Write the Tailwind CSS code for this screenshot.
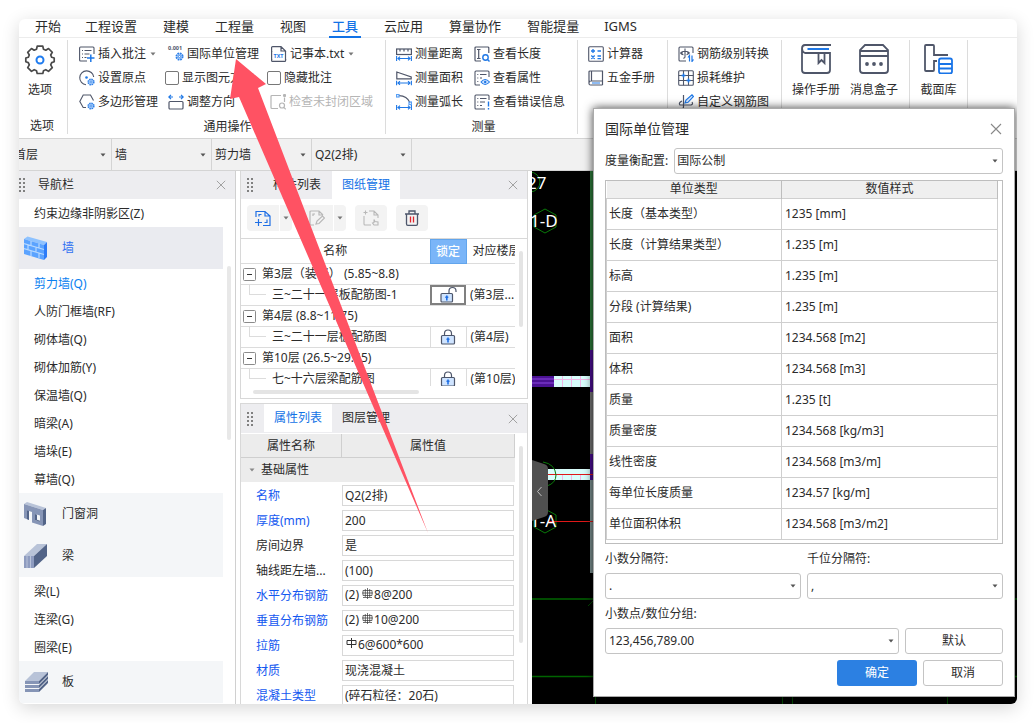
<!DOCTYPE html>
<html lang="zh-CN">
<head>
<meta charset="utf-8">
<meta name="viewport" content="width=device-width, initial-scale=1">
<title>国际单位管理</title>
<script src="https://cdn.jsdelivr.net/npm/@tailwindcss/browser@4"></script>
</head>
<body class="h-screen bg-white p-[19px] font-['Noto_Sans','Noto_Sans_CJK_SC',sans-serif] text-xs text-[#2b2b2b]">

<svg class="hidden" aria-hidden="true">
  <symbol id="close" viewBox="0 0 12 12"><path d="M1 1l10 10M11 1L1 11" fill="none" stroke="currentColor" stroke-width="1.1"/></symbol>
  <symbol id="caret" viewBox="0 0 6 4"><path d="M.5 .5h5L3 3.500z" fill="currentColor"/></symbol>
  <symbol id="grip" viewBox="0 0 6 14"><path d="M0 0h2v2H0zM4 0h2v2H4zM0 4h2v2H0zM4 4h2v2H4zM0 8h2v2H0zM4 8h2v2H4zM0 12h2v2H0zM4 12h2v2H4z" fill="#808080"/></symbol>
  <symbol id="cog" viewBox="0 0 8 8"><circle cx="4" cy="4" r="2.8" fill="#b9d6fb" stroke="#2f80e8" stroke-width="1.6" stroke-dasharray="1.5 .7"/><circle cx="4" cy="4" r="1" fill="#fff" stroke="#2f80e8" stroke-width=".8"/></symbol>
  <symbol id="span" viewBox="0 0 16 5"><path d="M.6 0v5M15.4 0v5M2 2.5h12M4 .7L2 2.5l2 1.8M12 .7l2 1.8-2 1.8" fill="none" stroke="#1f78e6" stroke-width="1.1"/></symbol>
  <symbol id="minus" viewBox="0 0 13 13"><rect x=".5" y=".5" width="12" height="12" rx="1" fill="#fff" stroke="#8b8b8b"/><path d="M4 6.5h5" stroke="#333"/></symbol>
  <symbol id="lock" viewBox="0 0 16 16"><path d="M4.500 7V4.500a3.500 3.500 0 017 0V7" fill="none" stroke="#4d566b" stroke-width="1.200"/><rect x="1.500" y="6.500" width="13" height="8.500" rx="1" fill="#cfe4ff" stroke="#4d566b" stroke-width="1.200"/><path d="M8 8.500v5M6.500 10.300h3" stroke="#1f6fe5" stroke-width="1.600"/></symbol>
  <symbol id="rebar3" viewBox="0 0 11 11"><path d="M1 2.500h9v5H1zM5.500 0v11M3.300 1v8M7.700 1v8M1 9.500h9M0 5h11" fill="none" stroke="#333" stroke-width=".7"/></symbol>
  <symbol id="rebar1" viewBox="0 0 11 11"><path d="M1 2.500h9v4H1zM5.500 0v10" fill="none" stroke="#333"/></symbol>
</svg>

<main class="relative flex h-full flex-col overflow-hidden rounded-md bg-white shadow-[0_4px_18px_rgba(0,0,0,0.16)]">

  <nav class="flex h-[19px] shrink-0 border-b border-[#ececec] pl-[3px] text-[13px] leading-[14px]">
    <a href="#" class="pr-[11px] pl-[13px]">开始</a>
    <a href="#" class="px-[13px]">工程设置</a>
    <a href="#" class="px-[13px]">建模</a>
    <a href="#" class="px-[13px]">工程量</a>
    <a href="#" class="px-[13px]">视图</a>
    <a href="#" class="mx-[10px] h-[19px] border-b-2 border-[#1272e6] px-[3px] font-medium text-[#1272e6]">工具</a>
    <a href="#" class="px-[13px]">云应用</a>
    <a href="#" class="px-[13px]">算量协作</a>
    <a href="#" class="px-[13px]">智能提量</a>
    <a href="#" class="px-3">IGMS</a>
  </nav>

  <section class="flex h-[101px] shrink-0 border-b border-[#d4d4d4] pt-1 text-xs leading-4" aria-label="工具">
    <div class="flex w-12 shrink-0 flex-col items-center">
      <button class="flex h-[72px] shrink-0 flex-col items-center gap-1.5 pt-0.5 pr-1.5">
        <svg class="size-8" viewBox="0 1 32 32" fill="none" stroke="#4a4a4a" stroke-width="1.700"><path d="M13.200 3.200h5.600l.7 3 2.300 1 2.700-1.700 3.800 3.800-1.600 2.700 1 2.300 2.500.7v3.800l-2.500.8-1 2.300 1.600 2.700-3.800 3.800-2.700-1.700-2.300 1-.7 2.800h-5.600l-.7-2.800-2.300-1-2.700 1.700-3.800-3.800 1.600-2.700-1-2.300-2.500-.8V15l2.500-.7 1-2.300-1.600-2.700 3.800-3.800 2.700 1.700 2.300-1z" stroke-linejoin="round"/><circle cx="16" cy="17" r="3.500" stroke="#1f7cf0" stroke-width="2"/></svg>
        选项
      </button>
      <span class="pr-0.5 leading-6">选项</span>
    </div>
    <div class="h-[94px] w-px shrink-0 -translate-y-0.5 bg-[#dcdcdc]"></div>

    <div class="w-[317px] shrink-0">
      <div class="grid grid-cols-[86px_102px_auto] grid-rows-[24px_24px_24px] items-center pl-[11px] whitespace-nowrap">
        <button class="flex items-center gap-[3px]">
          <svg class="size-4 shrink-0" viewBox="0 0 16 16" fill="none" stroke="#4f5669" stroke-width="1.100"><path d="M15 8V2q0-1-1-1H1.500Q.6 1 .6 2v12q0 1 1 1H8M5.500 4.500h7M5.500 8h5M5.500 11.500h2"/><path d="M3 4.500h1M3 8h1M3 11.500h1"/><path d="M8 12h7.500M11.800 8.500v7.500" stroke="#1f78e6" stroke-width="1.500"/></svg>
          插入批注<svg class="ml-px h-1 w-1.5 text-[#777]"><use href="#caret"/></svg>
        </button>
        <button class="flex items-center gap-[3px] pl-[3px]">
          <svg class="size-4 shrink-0 overflow-visible" viewBox="0 0 16 16"><text x="0" y="4" font-size="5.500" font-weight="700" fill="#4f5669">0.001</text><use href="#cog" x="7" y="6" width="9" height="9"/></svg>
          国际单位管理
        </button>
        <button class="flex items-center gap-[3px] pl-1">
          <svg class="size-4 shrink-0 overflow-visible" viewBox="0 0 16 16" fill="none" stroke="#4f5669" stroke-width="1.200"><path d="M.6 6V1.500q0-.9 1-.9H10l4.500 4.500V6M10 .6V5h4.500M.6 13v1.500q0 .9 1 .9h12q1 0 1-.9V13"/><path d="M.6 5v9M14.500 5v9"/><text x="2.500" y="12" font-size="5.500" font-weight="700" fill="#1f78e6" stroke="none">TXT</text></svg>
          记事本.txt<svg class="ml-px h-1 w-1.5 text-[#777]"><use href="#caret"/></svg>
        </button>

        <button class="flex items-center gap-[3px]">
          <svg class="size-4 shrink-0" viewBox="0 0 16 16" fill="none" stroke="#4f5669" stroke-width="1.100"><path d="M14.700 7A7 7 0 107 14.800"/><circle cx="7.500" cy="7.500" r="1.300" fill="#1f78e6" stroke="none"/><use href="#cog" x="8" y="8" width="8" height="8" stroke="none"/></svg>
          设置原点
        </button>
        <label class="flex items-center gap-[3px]"><input type="checkbox" class="size-3.5 appearance-none rounded-[2px] border border-[#777] bg-white">显示图元方向</label>
        <label class="flex items-center gap-[3px]"><input type="checkbox" class="size-3.5 appearance-none rounded-[2px] border border-[#777] bg-white">隐藏批注</label>

        <button class="flex items-center gap-[3px]">
          <svg class="size-4 shrink-0" viewBox="0 0 16 16" fill="none" stroke="#4f5669" stroke-width="1.100"><path d="M14.500 6.500L11.500 1H4.200L.8 7.500l3.400 6H7"/><use href="#cog" x="8" y="8" width="8" height="8" stroke="none"/></svg>
          多边形管理
        </button>
        <button class="flex items-center gap-[3px] pl-[3px]">
          <svg class="size-4 shrink-0" viewBox="0 0 16 16" fill="none" stroke="#4f5669" stroke-width="1.200"><rect x="1" y="7.500" width="14" height="7.500" rx="1"/><path d="M5 3H1M3 .8L.8 3 3 5.200M11 3h4M13 .8L15.200 3 13 5.200" stroke="#1f78e6"/></svg>
          调整方向
        </button>
        <button class="flex items-center gap-[3px] pl-[3px] text-[#b5b5b5]" disabled>
          <svg class="size-4 shrink-0" viewBox="0 0 16 16" fill="none" stroke="#b5b5b5" stroke-width="1.200"><path d="M11 1.500H2q-1 0-1 1v11q0 1 1 1h6M14.500 3.500V8"/><circle cx="14.500" cy="1.500" r="1" fill="#b5b5b5"/><circle cx="12" cy="11.500" r="2.500"/><path d="M13.800 13.300l2 2"/></svg>
          检查未封闭区域
        </button>
      </div>
      <div class="pl-0.5 text-center leading-[26px]">通用操作</div>
    </div>
    <div class="h-[94px] w-px shrink-0 -translate-y-0.5 bg-[#dcdcdc]"></div>

    <div class="w-[191px] shrink-0">
      <div class="grid grid-cols-[78px_auto] grid-rows-[24px_24px_24px] items-center pl-2.5 whitespace-nowrap">
        <button class="flex items-center gap-[3px]">
          <svg class="size-4 shrink-0" viewBox="0 0 16 16" fill="none" stroke="#4f5669" stroke-width="1.200"><rect x=".6" y="3" width="14.800" height="5.500"/><path d="M4 3v2.500M8 3v2.500M12 3v2.500"/><use href="#span" y="10" width="16" height="5"/></svg>
          测量距离
        </button>
        <button class="flex items-center gap-[3px]">
          <svg class="size-4 shrink-0" viewBox="0 0 16 16" fill="none" stroke="#4f5669" stroke-width="1.200"><path d="M14.800 7V2q0-1-1-1H2Q1 1 1 2v12q0 1 1 1h5M3 3.500h3.500M3 12.500h3.500M4.700 3.500v9"/><circle cx="11.500" cy="11.500" r="2.700" stroke="#1f78e6" stroke-width="1.400"/><path d="M13.500 13.500l2 2" stroke="#1f78e6" stroke-width="1.400"/></svg>
          查看长度
        </button>
        <button class="flex items-center gap-[3px]">
          <svg class="size-4 shrink-0" viewBox="0 0 16 16" fill="none" stroke="#4f5669" stroke-width="1.200"><path d="M.8 2v6.800h14.400V7z"/><use href="#span" y="10.500" width="16" height="5"/></svg>
          测量面积
        </button>
        <button class="flex items-center gap-[3px]">
          <svg class="size-4 shrink-0" viewBox="0 0 16 16" fill="none" stroke="#4f5669" stroke-width="1.100"><path d="M15 7V2q0-1-1-1H2Q1 1 1 2v12q0 1 1 1h4M6 4.500h6.500M6 8h2M3.300 4.500h1M3.300 8h1M3.300 11.500h1"/><path d="M7 12q4-5 8.500 0-4.500 5-8.500 0z" stroke="#1f78e6" fill="#cfe3ff"/><circle cx="11.200" cy="12" r="1.200" fill="#1f78e6" stroke="none"/></svg>
          查看属性
        </button>
        <button class="flex items-center gap-[3px]">
          <svg class="size-4 shrink-0" viewBox="0 0 16 16" fill="none" stroke="#4f5669" stroke-width="1.200"><path d="M3 1.700q8 .3 11 7"/><rect x=".5" y=".5" width="2.500" height="2.500" stroke="#59a0f5"/><rect x="13" y="8" width="2.500" height="2.500" stroke="#59a0f5"/><use href="#span" y="11" width="16" height="5"/></svg>
          测量弧长
        </button>
        <button class="flex items-center gap-[3px]">
          <svg class="size-4 shrink-0" viewBox="0 0 16 16" fill="none" stroke="#4f5669" stroke-width="1.100"><path d="M15 6V2q0-1-1-1H2Q1 1 1 2v12q0 1 1 1h9M6 4.500h6.500M6 8h5M6 11.500h2M3.300 4.500h1M3.300 8h1M3.300 11.500h1"/><path d="M14.500 7.500v5M14.500 14v1.500" stroke="#1f78e6" stroke-width="1.400"/></svg>
          查看错误信息
        </button>
      </div>
      <div class="pl-1 text-center leading-[26px]">测量</div>
    </div>
    <div class="h-[94px] w-px shrink-0 -translate-y-0.5 bg-[#dcdcdc]"></div>

    <div class="grid w-[89px] shrink-0 grid-rows-[24px_24px] content-start items-center pl-2.5 whitespace-nowrap">
      <button class="flex items-center gap-[3px]">
        <svg class="size-4 shrink-0" viewBox="0 0 16 16" fill="none" stroke="#1f78e6" stroke-width="1.300"><rect x=".7" y=".7" width="14.600" height="14.600" rx="1" stroke="#4f5669" stroke-width="1.100"/><path d="M3 5h4M5 3v4M9.500 5H13M3.300 9.500l3.400 3.400M6.700 9.500l-3.400 3.400M9.500 10H13M9.500 12.700H13"/></svg>
        计算器
      </button>
      <button class="flex items-center gap-[3px]">
        <svg class="size-4 shrink-0" viewBox="0 0 16 16" fill="none" stroke="#4f5669" stroke-width="1.200"><path d="M14.500 15H2.500Q1 15 1 13.500V2q0-1 1-1h12.500v10H3q-2 0-2 2M3.500 1v10M14.500 11v4"/><path d="M4 13h8" stroke="#1f78e6"/></svg>
        五金手册
      </button>
    </div>
    <div class="h-[94px] w-px shrink-0 -translate-y-0.5 bg-[#dcdcdc]"></div>

    <div class="grid w-[113px] shrink-0 grid-rows-[24px_24px_24px] content-start items-center pl-2.5 whitespace-nowrap">
      <button class="flex items-center gap-[3px]">
        <svg class="size-4 shrink-0" viewBox="0 0 16 16" fill="none" stroke="#4f5669" stroke-width="1.100"><path d="M15 7V2q0-1-1-1H2Q1 1 1 2v12q0 1 1 1h6"/><path d="M5.500 8.800Q3 8.500 3 7t4-1.800q4 .3 4 1.800-.2 1.200-2.500 1.700M2 7h3M9 7h3M7 2.500V11q0 1-1.800 1.200"/><path d="M11.500 15.500V9.500l-1.500 2M14 9.500v6l1.500-2" stroke="#1f78e6" stroke-width="1.200"/></svg>
        钢筋级别转换
      </button>
      <button class="flex items-center gap-[3px]">
        <svg class="size-4 shrink-0" viewBox="0 0 16 16" fill="none" stroke="#4f5669" stroke-width="1.100"><rect x=".7" y=".7" width="14.600" height="14.600" rx="1"/><path d="M.7 5.500h14.600M.7 10.500h14.600M5.500.7v14.600M10.500.7v14.600"/><path d="M5.500 3.500v4M3.500 5.500h4M10.500 8.500v4M8.500 10.500h4" stroke="#1f78e6" stroke-width="1.400"/></svg>
        损耗维护
      </button>
      <button class="flex items-center gap-[3px]">
        <svg class="size-4 shrink-0" viewBox="0 0 16 16" fill="none" stroke="#4f5669" stroke-width="1.200"><path d="M5.500 1v12q0 2-2 2M4 7Q0 9 2 11h11q2.500-1 1-3"/><path d="M7 9l1-3L14 .8 15.500 2.500 10 8.300z" stroke="#1f78e6" fill="#d9e9ff"/></svg>
        自定义钢筋图
      </button>
    </div>
    <div class="h-[94px] w-px shrink-0 -translate-y-0.5 bg-[#dcdcdc]"></div>

    <div class="flex w-[127px] shrink-0 items-start gap-2.5 pl-2.5 whitespace-nowrap">
      <button class="flex flex-col items-center gap-2 pt-0.5">
        <svg class="size-[30px]" viewBox="0 0 30 30" fill="none" stroke="#4f5669" stroke-width="1.800"><path d="M30 1H4Q1 1 1 4.500T4 9h25v17q0 3-3 3H4q-3 0-3-3V4.500M17.500 9v10l3-3 3 3V9"/><path d="M6.500 5H28" stroke="#1f78e6"/></svg>
        操作手册
      </button>
      <button class="flex flex-col items-center gap-2 pt-0.5">
        <svg class="size-[30px]" viewBox="0 0 30 30" fill="none" stroke="#4f5669" stroke-width="1.800"><path d="M1 12h28v14q0 3-3 3H4q-3 0-3-3zV6l5-5h18l5 5v6M1 7h28"/><g fill="#4f5669" stroke="none"><circle cx="8" cy="20" r="1.900"/><circle cx="15" cy="20" r="1.900"/><circle cx="22" cy="20" r="1.900"/></g></svg>
        消息盒子
      </button>
    </div>
    <div class="h-[94px] w-px shrink-0 -translate-y-0.5 bg-[#dcdcdc]"></div>
    <div class="flex w-[57px] shrink-0 items-start justify-center whitespace-nowrap">
      <button class="flex flex-col items-center gap-2 pt-0.5">
        <svg class="size-[30px]" viewBox="0 0 30 30" fill="none" stroke="#4f5669" stroke-width="1.800"><path d="M25 11H11V2q0-1-1-1H3Q2 1 2 2v24q0 1 1 1h7q1 0 1-1v-9h3"/><path d="M16 16.500q0-2 2-2h9q2 0 2 2v11q0 2-2 2h-9q-2 0-2-2zM16 20h13M16 24.500h13" stroke="#1874e8"/></svg>
        截面库
      </button>
    </div>
    <div class="h-[94px] w-px shrink-0 -translate-y-0.5 bg-[#dcdcdc]"></div>
  </section>

  <section class="flex h-8 shrink-0 overflow-hidden border-b border-[#d4d4d4] bg-[#f1f1f1]" aria-label="构件选择">
    <div class="relative -ml-2 w-[101px] border-r border-[#d4d4d4]"><select aria-label="楼层" class="h-full w-full appearance-none bg-transparent px-[3px]"><option>首层</option></select><svg class="pointer-events-none absolute top-3.5 right-[5px] h-1 w-1.5 text-[#555]"><use href="#caret"/></svg></div>
    <div class="relative w-[100px] border-r border-[#d4d4d4]"><select aria-label="构件大类" class="h-full w-full appearance-none bg-transparent px-[3px]"><option>墙</option></select><svg class="pointer-events-none absolute top-3.5 right-[5px] h-1 w-1.5 text-[#555]"><use href="#caret"/></svg></div>
    <div class="relative w-[100px] border-r border-[#d4d4d4]"><select aria-label="构件类型" class="h-full w-full appearance-none bg-transparent px-[3px]"><option>剪力墙</option></select><svg class="pointer-events-none absolute top-3.5 right-[5px] h-1 w-1.5 text-[#555]"><use href="#caret"/></svg></div>
    <div class="relative w-[100px] border-r border-[#d4d4d4]"><select aria-label="构件名称" class="h-full w-full appearance-none bg-transparent px-[3px]"><option>Q2(2排)</option></select><svg class="pointer-events-none absolute top-3.5 right-[5px] h-1 w-1.5 text-[#555]"><use href="#caret"/></svg></div>
  </section>

  <div class="flex min-h-0 flex-1">

    <aside class="flex w-[217px] shrink-0 flex-col border-r border-[#d0d0d0]">
      <header class="flex h-7 shrink-0 items-center bg-[#ededf0] pr-[9px]">
        <svg class="h-3.5 w-1.5"><use href="#grip"/></svg>
        <h2 class="ml-[13px] flex-1">导航栏</h2>
        <button aria-label="关闭导航栏" class="text-[#999]"><svg class="size-2.5"><use href="#close"/></svg></button>
      </header>
      <div class="flex min-h-0 flex-1 gap-1 overflow-hidden">
        <ul class="w-[204px] leading-7">
          <li><a href="#" class="block h-7 pl-[15px] leading-[30px]">约束边缘非阴影区(Z)</a></li>
          <li><button class="flex h-[42px] w-full items-center gap-3.5 bg-[#eaebf0] pl-[5px] text-[#2e6ff2]">
            <svg class="size-6" viewBox="0 0 24 24"><path d="M0 3l3.500-2.500L23 6l-3 3z" fill="#8ec2ff"/><path d="M0 3l20 6v15L0 18z" fill="#5ba3ff"/><path d="M20 9l3-3v15l-3 3z" fill="#2c7bf7"/><path d="M0 7.500l20 6M0 12.500l20 6M7 5v4.500M15 7.500V12M4 9v4.500M12 11.500v4.500M7 15v5M15 17v5" stroke="#b6d8ff" stroke-width="1.200"/></svg>墙</button></li>
          <li><a href="#" class="block h-7 pl-[15px] leading-[30px] text-[#0a80f0]">剪力墙(Q)</a></li>
          <li><a href="#" class="block h-7 pl-[15px] leading-[30px]">人防门框墙(RF)</a></li>
          <li><a href="#" class="block h-7 pl-[15px] leading-[30px]">砌体墙(Q)</a></li>
          <li><a href="#" class="block h-7 pl-[15px] leading-[30px]">砌体加筋(Y)</a></li>
          <li><a href="#" class="block h-7 pl-[15px] leading-[30px]">保温墙(Q)</a></li>
          <li><a href="#" class="block h-7 pl-[15px] leading-[30px]">暗梁(A)</a></li>
          <li><a href="#" class="block h-7 pl-[15px] leading-[30px]">墙垛(E)</a></li>
          <li><a href="#" class="block h-7 pl-[15px] leading-[30px]">幕墙(Q)</a></li>
          <li><button class="flex h-[42px] w-full items-center gap-3.5 bg-[#f4f6f8] pl-[5px]">
            <svg class="size-6" viewBox="0 0 24 24"><path d="M0 2l3-2 19 6-3 2z" fill="#b8c3d8"/><path d="M0 2l19 6v16L8 20.500V10L5 9v9l-5-2zM11 12v6l5 1.500v-6z" fill="#8695b6" fill-rule="evenodd"/><path d="M19 8l3-2v16l-3 2zM3 8.500L5 9v9l-2-1zM11 12l2 .7v5l3 1v1L11 18z" fill="#526488"/></svg>门窗洞</button></li>
          <li><button class="flex h-[42px] w-full items-center gap-3.5 bg-[#f4f6f8] pl-[5px]">
            <svg class="size-6" viewBox="0 0 24 24"><path d="M0 12L13 0h10L10 12z" fill="#b8c3d8"/><path d="M0 12h10v12H0z" fill="#8e9cc0"/><path d="M10 12L23 0v12L10 24z" fill="#526488"/><path d="M3 12v12M6.500 12v12" stroke="#b9c3da"/></svg>梁</button></li>
          <li><a href="#" class="block h-7 pl-[15px] leading-[30px]">梁(L)</a></li>
          <li><a href="#" class="block h-7 pl-[15px] leading-[30px]">连梁(G)</a></li>
          <li><a href="#" class="block h-7 pl-[15px] leading-[30px]">圈梁(E)</a></li>
          <li><button class="flex h-[42px] w-full items-center gap-3.5 bg-[#f4f6f8] pl-[5px]">
            <svg class="size-6" viewBox="0 0 24 24"><path d="M1 11L10 2h14l-9 9z" fill="#b8c3d8"/><path d="M1 11h14v3H1zM1 15h14v3H1zM1 19h14v3H1z" fill="#8695b6"/><path d="M15 11l9-9v3l-9 9zM15 15l9-9v3l-9 9zM15 19l9-9v3l-9 9z" fill="#526488"/></svg>板</button></li>
        </ul>
        <div class="mt-[67px] h-[174px] w-1 rounded-full bg-[#e8e8e8]"></div>
      </div>
    </aside>

    <div class="flex w-[296px] shrink-0 flex-col gap-1 px-1">
      <section class="flex h-[228px] shrink-0 flex-col border border-t-0 border-[#d8d8d8]">
        <header class="flex h-7 shrink-0 items-center bg-[#ededf0] pr-[9px] pl-1.5">
          <svg class="mr-[18px] h-3.5 w-1.5"><use href="#grip"/></svg>
          <div class="flex flex-1 self-stretch" role="tablist">
            <button role="tab" class="w-[61px] pr-2.5 pl-0.5 text-left whitespace-nowrap">构件列表</button>
            <button role="tab" aria-selected="true" class="w-[68px] bg-white text-[#1272e6]">图纸管理</button>
          </div>
          <button aria-label="关闭图纸管理" class="text-[#999]"><svg class="size-2.5"><use href="#close"/></svg></button>
        </header>
        <div class="flex h-10 shrink-0 items-center gap-[9px] border-b border-[#d8d8d8] pb-px pl-1.5">
          <div class="flex gap-px">
            <button aria-label="添加图纸" class="grid h-[26px] w-8 place-items-center rounded-l-sm bg-[#f3f3f3]"><svg class="size-4" viewBox="0 0 16 16" fill="none" stroke="#1f6fe5" stroke-width="1.200"><path d="M1 7V1.500h9l5 4.500v9.500H8M10 1.500V6h5M4 6.500V4.500h2.500M12 9.500v3H9.500M0 12.500h7M3.500 9v7"/></svg></button>
            <button aria-label="添加图纸选项" class="grid h-[26px] w-3 place-items-center rounded-r-sm bg-[#f3f3f3] text-[#777]"><svg class="h-1 w-1.5"><use href="#caret"/></svg></button>
          </div>
          <div class="flex gap-px">
            <button aria-label="分割图纸" class="grid h-[26px] w-8 place-items-center rounded-l-sm bg-[#f3f3f3]"><svg class="size-4" viewBox="0 0 16 16" fill="none" stroke="#b8b8b8" stroke-width="1.200"><path d="M5 15H2q-1 0-1-1V2q0-1 1-1h8l4 4M10 1v4h4M4 6V4h2M7 14l1-3 5.500-5L15.500 8 10 13.500z"/></svg></button>
            <button aria-label="分割图纸选项" class="grid h-[26px] w-3 place-items-center rounded-r-sm bg-[#f3f3f3] text-[#777]"><svg class="h-1 w-1.5"><use href="#caret"/></svg></button>
          </div>
          <button aria-label="定位图纸" class="grid h-[26px] w-8 place-items-center rounded-sm bg-[#f3f3f3]"><svg class="size-4" viewBox="0 0 16 16" fill="none" stroke="#b8b8b8" stroke-width="1.100"><path d="M6 1h5l4 4v3M11 1v4h4M1 6v8q0 1 1 1h6M.5 2.500h4M2.500.5v4M11 15l-1.500-2 1.500-.5V9.500l1 2 3 .5v3z"/></svg></button>
          <button aria-label="删除图纸" class="grid h-[26px] w-8 place-items-center rounded-sm bg-[#f3f3f3]"><svg class="size-4" viewBox="0 0 16 16" fill="none" stroke="#4d566b" stroke-width="1.300"><path d="M1 4h14M5 4V1h6v3M2.500 4v10q0 1.300 1.300 1.300h8.400q1.300 0 1.300-1.300V4"/><path d="M6.500 6.500v6M9.500 6.500v6" stroke="#e0262d"/></svg></button>
        </div>
        <div class="flex gap-1">
          <div class="h-[147px] w-[274px] overflow-hidden">
            <table class="w-[300px] table-fixed border-collapse leading-5 whitespace-nowrap">
              <colgroup><col class="w-[189px]"><col class="w-9"><col></colgroup>
              <thead><tr class="h-6 border-b border-[#dcdcdc]"><th class="font-normal">名称</th><th class="border border-[#62a5ec] bg-[#7ab5f8] font-medium text-white">锁定</th><th class="pl-1.5 text-left font-normal">对应楼层</th></tr></thead>
              <tbody>
                <tr class="h-[21px] border-b border-[#dcdcdc]"><td colspan="3"><div class="flex h-5 items-center gap-1.5 pl-0.5"><button aria-label="收起第3层" class="h-[13px]"><svg class="size-[13px]"><use href="#minus"/></svg></button>第3层（装修） (5.85~8.8)</div></td></tr>
                <tr class="h-[21px] border-b border-[#dcdcdc]"><td class="pl-2"><div class="flex h-5 gap-1.5"><i class="h-2.5 w-[17px] border-b border-l border-[#dcdcdc]"></i>三~二十一层板配筋图-1</div></td><td class="inset-ring-2 inset-ring-[#808080]"><svg class="mx-auto size-4 overflow-visible" viewBox="0 0 16 16"><path d="M9 7V4a3.500 3.500 0 017 0v1" fill="none" stroke="#4d566b" stroke-width="1.200"/><rect x="1" y="6.500" width="11.500" height="8.500" rx="1" fill="#cfe4ff" stroke="#4d566b" stroke-width="1.200"/><path d="M6.800 8.500v5M5.300 10.300h3" stroke="#1f6fe5" stroke-width="1.600"/></svg></td><td class="pl-1">(第3层...</td></tr>
                <tr class="h-[21px] border-b border-[#dcdcdc]"><td colspan="3"><div class="flex h-5 items-center gap-1.5 pl-0.5"><button aria-label="收起第4层" class="h-[13px]"><svg class="size-[13px]"><use href="#minus"/></svg></button>第4层 (8.8~11.75)</div></td></tr>
                <tr class="h-[21px] border-b border-[#dcdcdc]"><td class="pl-2"><div class="flex h-5 gap-1.5"><i class="h-2.5 w-[17px] border-b border-l border-[#dcdcdc]"></i>三~二十一层板配筋图</div></td><td class="border-x border-[#dcdcdc]"><svg class="mx-auto size-4"><use href="#lock"/></svg></td><td class="pl-1">(第4层)</td></tr>
                <tr class="h-[21px] border-b border-[#dcdcdc]"><td colspan="3"><div class="flex h-5 items-center gap-1.5 pl-0.5"><button aria-label="收起第10层" class="h-[13px]"><svg class="size-[13px]"><use href="#minus"/></svg></button>第10层 (26.5~29.45)</div></td></tr>
                <tr class="h-[21px]"><td class="pl-2"><div class="flex h-5 gap-1.5"><i class="h-2.5 w-[17px] border-b border-l border-[#dcdcdc]"></i>七~十六层梁配筋图</div></td><td class="border-x border-[#dcdcdc]"><svg class="mx-auto size-4"><use href="#lock"/></svg></td><td class="pl-1">(第10层)</td></tr>
              </tbody>
            </table>
          </div>
          <div class="mt-3 h-[76px] w-1 rounded-full bg-[#e4e4e4]"></div>
        </div>
        <div class="mt-1 ml-3 h-1 w-[166px] rounded-full bg-[#e4e4e4]"></div>
      </section>

      <section class="flex min-h-0 flex-1 flex-col overflow-hidden border border-b-0 border-[#d8d8d8]">
        <header class="flex h-[29px] shrink-0 items-center bg-[#ededf0] pr-[9px] pl-1.5">
          <svg class="mr-[11px] h-3.5 w-1.5"><use href="#grip"/></svg>
          <div class="flex flex-1 self-stretch pb-px" role="tablist">
            <button role="tab" aria-selected="true" class="w-[68px] bg-white text-[#1272e6]">属性列表</button>
            <button role="tab" class="w-[68px]">图层管理</button>
          </div>
          <button aria-label="关闭属性列表" class="text-[#999]"><svg class="size-2.5"><use href="#close"/></svg></button>
        </header>
        <div class="flex min-h-0 flex-1 gap-1 pt-px">
          <div class="w-[274px]">
            <div class="grid h-6 grid-cols-[101px_auto] border-r border-b border-[#cfcfcf] bg-[#ececec] text-center leading-6"><span class="border-r border-[#cfcfcf]">属性名称</span><span>属性值</span></div>
            <button class="flex h-6 w-full items-center gap-1.5 bg-[#ececec] pl-2"><svg class="h-1 w-1.5 text-[#888]"><use href="#caret"/></svg>基础属性</button>
            <div class="grid grid-cols-[86px_172px] auto-rows-[21px] gap-y-1 pt-[3px] pl-[15px] leading-[21px] whitespace-nowrap">
              <label for="p1" class="text-[#1458f0]">名称</label><input id="p1" value="Q2(2排)" class="border border-[#d8d8d8] px-0.5">
              <label for="p2" class="text-[#1458f0]">厚度(mm)</label><input id="p2" value="200" class="border border-[#d8d8d8] px-0.5">
              <label for="p3">房间边界</label><input id="p3" value="是" class="border border-[#d8d8d8] px-0.5">
              <label for="p4">轴线距左墙...</label><input id="p4" value="(100)" class="border border-[#d8d8d8] px-0.5">
              <span id="l5" class="text-[#1458f0]">水平分布钢筋</span><div role="textbox" contenteditable="true" aria-labelledby="l5" class="flex border border-[#d8d8d8] px-0.5 leading-[18px]">(2)<svg class="mt-0.5 mr-px ml-[3px] size-[11px]"><use href="#rebar3"/></svg>8@200</div>
              <span id="l6" class="text-[#1458f0]">垂直分布钢筋</span><div role="textbox" contenteditable="true" aria-labelledby="l6" class="flex border border-[#d8d8d8] px-0.5 leading-[18px]">(2)<svg class="mt-0.5 mr-px ml-[3px] size-[11px]"><use href="#rebar3"/></svg>10@200</div>
              <span id="l7" class="text-[#1458f0]">拉筋</span><div role="textbox" contenteditable="true" aria-labelledby="l7" class="flex border border-[#d8d8d8] px-0.5 leading-[18px]"><svg class="mx-px mt-0.5 size-[11px]"><use href="#rebar1"/></svg>6@600*600</div>
              <label for="p8" class="text-[#1458f0]">材质</label><input id="p8" value="现浇混凝土" class="border border-[#d8d8d8] px-0.5">
              <label for="p9" class="text-[#1458f0]">混凝土类型</label><input id="p9" value="(碎石粒径：20石)" class="border border-[#d8d8d8] px-0.5">
            </div>
          </div>
          <div class="mt-3 h-[197px] w-1 rounded-full bg-[#e4e4e4]"></div>
        </div>
      </section>
    </div>

    <div class="min-w-0 flex-1 bg-black">
      <svg class="h-full w-full" role="img" aria-label="绘图区">
        <g transform="translate(-532 -171)">
          <g fill="none" stroke="#0a7a0a">
            <circle cx="530" cy="182" r="10"/><path d="M545 209l11 6v12l-11 6-11-6v-12zM545 509l11 6v12l-11 6-11-6v-12z"/>
            <path d="M532 599h485M532 676.500h485" stroke="#006400" stroke-width="1.500"/><path d="M588 606l6-6M595.500 690v14M782.500 690v14M792.500 690v14M947.500 690v14" stroke="#004a00"/>
          </g>
          <path d="M590 171h3v179h-3z" fill="#2f7d3c"/><path d="M590 350h3v42h-3zM590 454h3v26h-3z" fill="#4d0f96"/><path d="M590 392h3v62h-3z" fill="#777"/><path d="M590 480h3v93h-3z" fill="#7f9494"/>
          <path d="M532 376h22v11h-22z" fill="#4b1293"/><path d="M532 379h22M532 383h22" stroke="#8c46e0"/>
          <path d="M554 376h36v11h-36zM548 469h42v11h-42z" fill="#d8fdfb"/><path d="M554 379.500h36M562.500 376v11M571.500 376v11M580.500 376v11M562.500 475v5M571.500 475v5M580.500 475v5" stroke="#f0b6e6"/>
          <path d="M548 474.500h45M548 521.500h45" stroke="#e01818"/>
          <path d="M543 462q12 2 13 13 0 8-9 11" fill="none" stroke="#0a7a0a"/>
          <g fill="#fff" font-size="17"><text x="527" y="189">27</text><text x="530" y="227">1-D</text><text x="530" y="527">1-A</text></g>
          <path d="M532 460l12 4q4 1 4 5v43q0 4-4 5l-12 4z" fill="#505050"/><path d="M541.500 487l-4 4.500 4 4.500" fill="none" stroke="#c0c0c0"/>
        </g>
      </svg>
    </div>
  </div>

  <svg class="pointer-events-none absolute top-10 left-[211px] h-[474px] w-[198px]" viewBox="230 59 198 474" aria-hidden="true"><path d="M236 59l30 25-8 4 170 445L239 97l-9 2z" fill="#ff5263"/></svg>

  <section role="dialog" aria-labelledby="dlg" class="absolute top-[89px] right-0.5 w-[422px] border border-[#aaa] bg-white px-[11px] pb-2.5 shadow-[0_0_9px_rgba(0,0,0,0.75)]">
    <header class="flex h-[39px] items-center justify-between pr-px">
      <h2 id="dlg" class="text-sm">国际单位管理</h2>
      <button aria-label="关闭" class="text-[#888]"><svg class="size-3"><use href="#close"/></svg></button>
    </header>
    <div class="flex items-center gap-1.5 whitespace-nowrap">
      <label for="cfg">度量衡配置:</label>
      <div class="relative flex-1"><select id="cfg" class="h-[26px] w-full appearance-none rounded-[3px] border border-[#c4c4c4] bg-white px-0.5"><option>国际公制</option></select><svg class="pointer-events-none absolute top-[11px] right-[5px] h-1 w-1.5 text-[#555]"><use href="#caret"/></svg></div>
    </div>
    <div class="mt-1.5 border border-[#bdbdbd] pr-1 pb-[3px]">
      <table class="w-full table-fixed border-collapse">
        <colgroup><col class="w-[175px]"><col></colgroup>
        <thead><tr class="h-[17px] border-b border-[#bdbdbd] bg-[#efefef] leading-4"><th class="border-r border-[#bdbdbd] font-normal">单位类型</th><th class="border-r border-[#bdbdbd] font-normal">数值样式</th></tr></thead>
        <tbody>
          <tr class="h-[31px]"><td class="border border-[#cfcfcf] px-0.5">长度（基本类型）</td><td class="border border-[#cfcfcf] px-[3px]">1235 [mm]</td></tr>
          <tr class="h-[31px]"><td class="border border-[#cfcfcf] px-0.5">长度（计算结果类型）</td><td class="border border-[#cfcfcf] px-[3px]">1.235 [m]</td></tr>
          <tr class="h-[31px]"><td class="border border-[#cfcfcf] px-0.5">标高</td><td class="border border-[#cfcfcf] px-[3px]">1.235 [m]</td></tr>
          <tr class="h-[31px]"><td class="border border-[#cfcfcf] px-0.5">分段 (计算结果)</td><td class="border border-[#cfcfcf] px-[3px]">1.235 [m]</td></tr>
          <tr class="h-[31px]"><td class="border border-[#cfcfcf] px-0.5">面积</td><td class="border border-[#cfcfcf] px-[3px]">1234.568 [m2]</td></tr>
          <tr class="h-[31px]"><td class="border border-[#cfcfcf] px-0.5">体积</td><td class="border border-[#cfcfcf] px-[3px]">1234.568 [m3]</td></tr>
          <tr class="h-[31px]"><td class="border border-[#cfcfcf] px-0.5">质量</td><td class="border border-[#cfcfcf] px-[3px]">1.235 [t]</td></tr>
          <tr class="h-[31px]"><td class="border border-[#cfcfcf] px-0.5">质量密度</td><td class="border border-[#cfcfcf] px-[3px]">1234.568 [kg/m3]</td></tr>
          <tr class="h-[31px]"><td class="border border-[#cfcfcf] px-0.5">线性密度</td><td class="border border-[#cfcfcf] px-[3px]">1234.568 [m3/m]</td></tr>
          <tr class="h-[31px]"><td class="border border-[#cfcfcf] px-0.5">每单位长度质量</td><td class="border border-[#cfcfcf] px-[3px]">1234.57 [kg/m]</td></tr>
          <tr class="h-[31px]"><td class="border border-[#cfcfcf] px-0.5">单位面积体积</td><td class="border border-[#cfcfcf] px-[3px]">1234.568 [m3/m2]</td></tr>
        </tbody>
      </table>
    </div>
    <div class="grid grid-cols-2 gap-x-1.5">
      <label for="dec" class="leading-[29px]">小数分隔符:</label>
      <label for="tho" class="leading-[29px]">千位分隔符:</label>
      <div class="relative"><select id="dec" class="h-[26px] w-full appearance-none rounded-[3px] border border-[#c4c4c4] bg-white px-[3px]"><option>.</option></select><svg class="pointer-events-none absolute top-[11px] right-[5px] h-1 w-1.5 text-[#555]"><use href="#caret"/></svg></div>
      <div class="relative"><select id="tho" class="h-[26px] w-full appearance-none rounded-[3px] border border-[#c4c4c4] bg-white px-[3px]"><option>,</option></select><svg class="pointer-events-none absolute top-[11px] right-[5px] h-1 w-1.5 text-[#555]"><use href="#caret"/></svg></div>
    </div>
    <label for="grp" class="block leading-[29px]">小数点/数位分组:</label>
    <div class="flex gap-1.5">
      <div class="relative flex-1"><select id="grp" class="h-[26px] w-full appearance-none rounded-[3px] border border-[#c4c4c4] bg-white px-[3px]"><option>123,456,789.00</option></select><svg class="pointer-events-none absolute top-[11px] right-[5px] h-1 w-1.5 text-[#555]"><use href="#caret"/></svg></div>
      <button class="h-[26px] w-[98px] rounded-[3px] border border-[#c4c4c4]">默认</button>
    </div>
    <div class="mt-1.5 flex justify-end gap-1.5">
      <button class="h-[26px] w-20 rounded-[3px] bg-[#2c80e2] text-white">确定</button>
      <button class="h-[26px] w-20 rounded-[3px] border border-[#c4c4c4]">取消</button>
    </div>
  </section>
</main>
</body>
</html>
